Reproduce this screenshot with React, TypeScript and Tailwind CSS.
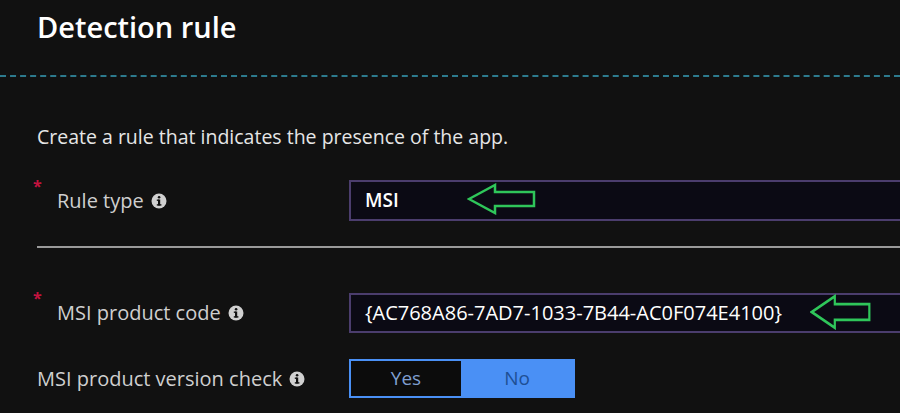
import React from "react";

const InfoIcon = () => (
  <svg width="16" height="16" viewBox="0 0 16 16" className="ml-[7px] inline-block shrink-0">
    <circle cx="8" cy="8" r="7.5" fill="#d0d0d0" />
    <rect x="7" y="6.5" width="2.2" height="6" fill="#111" />
    <circle cx="8.1" cy="4.2" r="1.3" fill="#111" />
    <rect x="5.8" y="6.5" width="2" height="1.4" fill="#111" />
    <rect x="5.8" y="11.2" width="4.6" height="1.4" fill="#111" />
  </svg>
);

const GreenArrow = ({ w, h }: { w: number; h: number }) => (
  <svg width={w} height={h} viewBox="0 0 70 32" preserveAspectRatio="none">
    <path
      d="M2 16 L28 2 L28 9 L67 9 L67 23 L28 23 L28 30 Z"
      fill="none"
      stroke="#2fc65a"
      strokeWidth="2.5"
      strokeLinejoin="miter"
    />
  </svg>
);

const Required = () => (
  <span className="absolute left-[-24px] top-[-12px] text-[16px] font-bold text-[#c4133f]">*</span>
);

const App = () => {
  return (
    <div
      className="h-[413px] w-[900px] overflow-hidden bg-[#111111] text-[#cfcfcf]"
      style={{ fontFamily: '"Open Sans", "Noto Sans", sans-serif' }}
    >
      <div className="px-[37px] pt-[9px]">
        <h1 className="text-[29px] font-semibold leading-[36px] text-white">Detection rule</h1>
      </div>
      <div className="mt-[30px] border-t-2 border-dashed border-[#2d7b8e]" />

      <div className="pl-[37px]">
        <p className="mt-[48px] text-[19.5px] leading-[24px] text-[#e6e6e6]">
          Create a rule that indicates the presence of the app.
        </p>

        <div className="mt-[31px] flex items-center">
          <div className="relative ml-[20px] flex w-[292px] shrink-0 items-center text-[20px]">
            <Required />
            <span>Rule type</span>
            <InfoIcon />
          </div>
          <div className="relative flex h-[41px] w-[600px] shrink-0 items-center border-2 border-[#4b3d6d] bg-[#0b0a14] pl-[14px]">
            <span className="text-[19px] font-semibold text-white">MSI</span>
            <span className="absolute left-[116px] top-[1px] flex">
              <GreenArrow w={70} h={32} />
            </span>
          </div>
        </div>

        <div className="mt-[25px] h-[2px] bg-[#9a9a9a]" />

        <div className="mt-[45px] flex items-center">
          <div className="relative ml-[20px] flex w-[292px] shrink-0 items-center text-[20px]">
            <Required />
            <span>MSI product code</span>
            <InfoIcon />
          </div>
          <div className="relative flex h-[40px] w-[600px] shrink-0 items-center border-2 border-[#4b3d6d] bg-[#0b0a14] pl-[14px]">
            <span className="text-[20px] text-white">{"{AC768A86-7AD7-1033-7B44-AC0F074E4100}"}</span>
            <span className="absolute left-[459px] top-[-1px] flex">
              <GreenArrow w={62} h={36} />
            </span>
          </div>
        </div>

        <div className="mt-[26px] flex items-center">
          <div className="flex w-[312px] shrink-0 items-center text-[20px]">
            <span>MSI product version check</span>
            <InfoIcon />
          </div>
          <div className="flex h-[39px] w-[226px] shrink-0 border-2 border-[#4a90f5] bg-[#4a90f5]">
            <div className="flex w-[110px] items-center justify-center bg-[#0c0c0c] text-[19px] text-[#7f9fd0]">
              Yes
            </div>
            <div className="flex flex-1 items-center justify-center text-[19px] text-[#1e4f94]">No</div>
          </div>
        </div>
      </div>
    </div>
  );
};

export default App;
